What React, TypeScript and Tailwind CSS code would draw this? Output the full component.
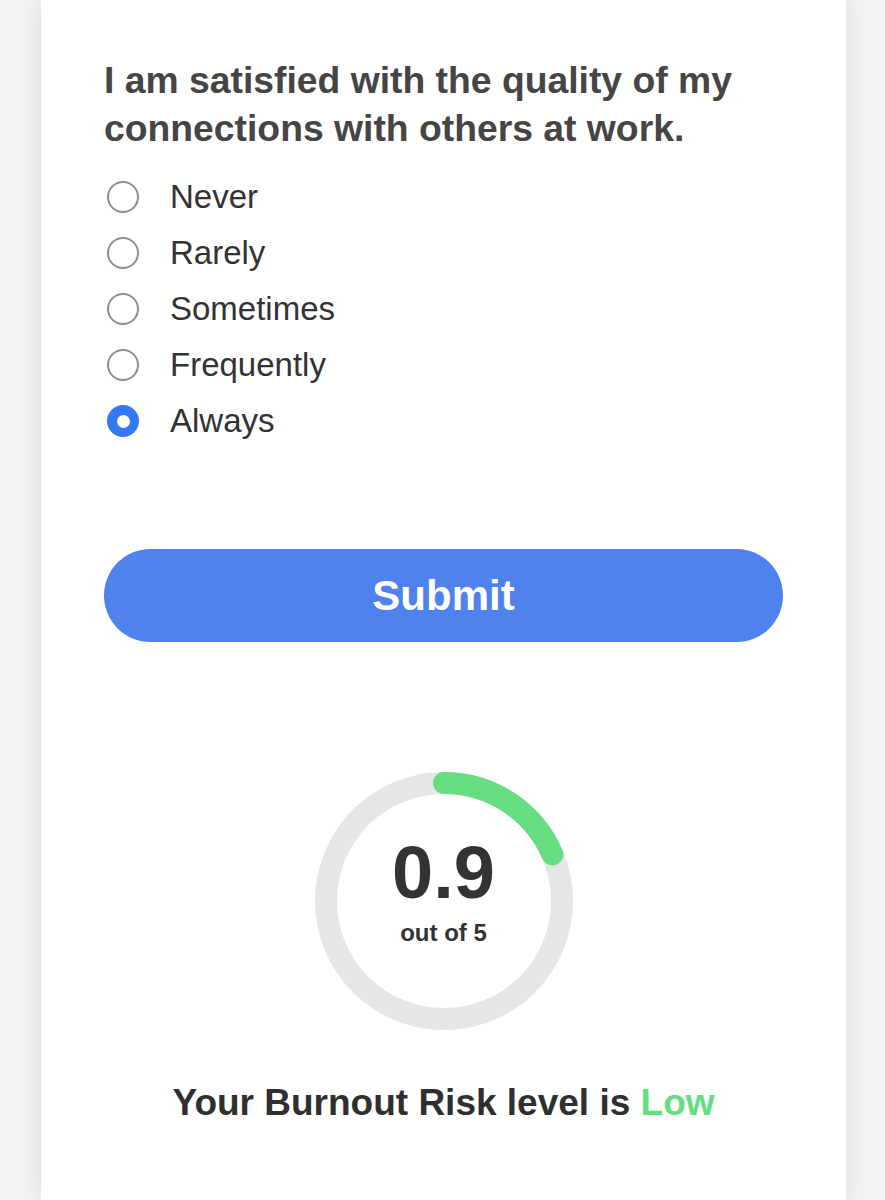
const options = ['Never', 'Rarely', 'Sometimes', 'Frequently', 'Always']

function Gauge({ score, max }: { score: number; max: number }) {
  const r = 118
  const circ = 2 * Math.PI * r
  const filled = (score / max) * circ + 4

  return (
    <div className="relative mx-auto mt-[130px] w-[258px] h-[258px]">
      <svg width="258" height="258" viewBox="0 0 258 258">
        <circle cx="129" cy="129" r={r} fill="none" stroke="#e6e6e6" strokeWidth="22" />
        <circle
          cx="129"
          cy="129"
          r={r}
          fill="none"
          stroke="#66dd80"
          strokeWidth="22"
          strokeLinecap="round"
          strokeDasharray={`${filled} ${circ}`}
          transform="rotate(-90 129 129)"
        />
      </svg>
      <div className="absolute inset-0 flex flex-col items-center justify-center pb-[21px] text-[#333]">
        <div className="text-[74px] leading-[74px] font-bold">{score}</div>
        <div className="mt-[11px] text-[24px] leading-[24px] font-bold">out of {max}</div>
      </div>
    </div>
  )
}

export default function App() {
  return (
    <div
      className="min-h-screen bg-[#f2f2f2]"
      style={{ fontFamily: '"Liberation Sans", Arial, sans-serif' }}
    >
      <div className="ml-[41px] w-[805px] min-h-screen bg-white shadow-[0_0_22px_rgba(0,0,0,0.09)] px-[63px] pt-[56px] pb-[40px]">
        <h2 className="text-[37.3px] leading-[48px] font-bold text-[#454545]">
          I am satisfied with the quality of my connections with others at work.
        </h2>

        <div className="mt-[17px]">
          {options.map((opt) => {
            const checked = opt === 'Always'
            return (
              <label key={opt} className="flex items-center h-[56px]">
                {checked ? (
                  <span className="ml-[3px] w-[32px] h-[32px] rounded-full bg-[#3478f6] flex items-center justify-center">
                    <span className="w-[13px] h-[13px] rounded-full bg-white"></span>
                  </span>
                ) : (
                  <span className="ml-[3px] w-[32px] h-[32px] rounded-full border-[2.5px] border-[#8e8e8e]"></span>
                )}
                <span className="ml-[31px] text-[33px] text-[#333]">{opt}</span>
              </label>
            )
          })}
        </div>

        <button className="mt-[100px] w-full h-[93px] rounded-full bg-[#4f82ec] text-white text-[42px] font-bold">
          Submit
        </button>

        <Gauge score={0.9} max={5} />

        <p className="mt-[51px] text-center text-[37px] leading-[44px] font-bold text-[#2f2f2f]">
          Your Burnout Risk level is <span className="text-[#66dd80]">Low</span>
        </p>
      </div>
    </div>
  )
}
